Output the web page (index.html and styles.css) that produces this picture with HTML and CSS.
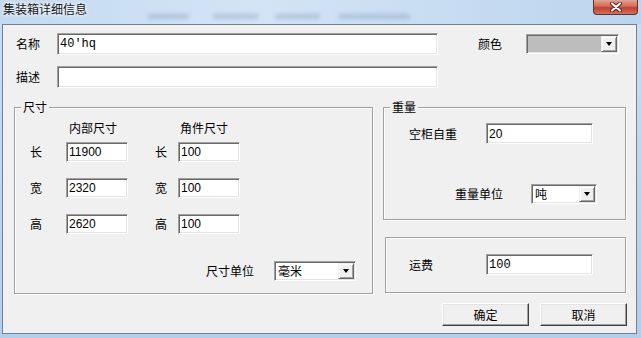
FILE: index.html
```html
<!DOCTYPE html>
<html lang="zh-CN">
<head>
    <meta charset="UTF-8">
    <title>集装箱详细信息</title>
    <link rel="stylesheet" href="styles.css">
</head>
<body>
    <div class="titlebar">
        <span class="title">集装箱详细信息</span>
        <span class="smudges">
            <i class="smudge s1"></i><i class="smudge s2"></i><i class="smudge s3"></i><i class="smudge s4"></i>
        </span>
        <span class="close">
            <svg width="14" height="10" viewBox="0 0 14 10">
                <path d="M3 1.5 L11 8.5 M11 1.5 L3 8.5" stroke="#5a1e18" stroke-width="4" stroke-linecap="round"/>
                <path d="M3 1.5 L11 8.5 M11 1.5 L3 8.5" stroke="#fff" stroke-width="2.2" stroke-linecap="round"/>
            </svg>
        </span>
    </div>

    <div class="client">
        <div class="row first">
            <label class="lbl field-lbl">名称</label>
            <input class="text wide mono" type="text" value="40'hq">
            <label class="lbl color-lbl">颜色</label>
            <div class="combo color-combo"><span class="combo-text"></span><b class="drop"></b></div>
        </div>
        <div class="row second">
            <label class="lbl field-lbl">描述</label>
            <input class="text wide" type="text" value="">
        </div>

        <div class="lower">
            <div class="group size">
                <div class="legend">尺寸</div>
                <div class="head">
                    <span class="head-inner">内部尺寸</span>
                    <span>角件尺寸</span>
                </div>
                <div class="dims">
                    <span class="lbl">长</span><input class="text dim" type="text" value="11900">
                    <span></span>
                    <span class="lbl">长</span><input class="text dim" type="text" value="100">

                    <span class="lbl">宽</span><input class="text dim" type="text" value="2320">
                    <span></span>
                    <span class="lbl">宽</span><input class="text dim" type="text" value="100">

                    <span class="lbl">高</span><input class="text dim" type="text" value="2620">
                    <span></span>
                    <span class="lbl">高</span><input class="text dim" type="text" value="100">
                </div>
                <div class="unit-row">
                    <span class="lbl unit-lbl">尺寸单位</span>
                    <div class="combo size-unit"><span class="combo-text">毫米</span><b class="drop"></b></div>
                </div>
            </div>

            <div class="side">
                <div class="group weight">
                    <div class="legend">重量</div>
                    <div class="w-row tare">
                        <span class="lbl w-lbl">空柜自重</span>
                        <input class="text short" type="text" value="20">
                    </div>
                    <div class="w-row unit">
                        <span class="lbl w-unit-lbl">重量单位</span>
                        <div class="combo weight-unit"><span class="combo-text">吨</span><b class="drop"></b></div>
                    </div>
                </div>
                <div class="group freight">
                    <div class="w-row fee">
                        <span class="lbl w-lbl">运费</span>
                        <input class="text short mono" type="text" value="100">
                    </div>
                </div>
            </div>
        </div>

        <div class="buttons">
            <button class="btn">确定</button>
            <button class="btn">取消</button>
        </div>
    </div>
</body>
</html>
```

FILE: styles.css
```css
body {
    margin: 0;
    width: 641px;
    height: 338px;
    overflow: hidden;
    background: linear-gradient(#cadff4, #b4cde9);
    font-family: "Noto Sans CJK SC", "Liberation Sans", sans-serif;
    font-size: 12px;
    color: #000;
}

/* title bar */
.titlebar {
    height: 24px;
    display: flex;
    align-items: flex-start;
    background: linear-gradient(90deg, #c4daf1, #d3e4f6 40%, #bcd4ee);
}
.title {
    width: 87px;
    padding: 1px 0 0 3px;
    box-sizing: border-box;
    line-height: 15px;
    white-space: nowrap;
    color: #151515;
    text-shadow: 0 0 5px #fff, 0 0 3px #fff;
}
.smudges {
    display: flex;
    margin: 14px 0 0 61px;
}
.smudge {
    display: block;
    height: 5px;
    border-radius: 2px;
    background: rgba(60, 90, 140, 0.22);
    filter: blur(2px);
}
.s1 { width: 41px; }
.s2 { width: 45px; margin-left: 24px; }
.s3 { width: 45px; margin-left: 17px; }
.s4 { width: 72px; margin-left: 18px; }
.close {
    margin: 0 3px 0 auto;
    width: 45px;
    height: 15px;
    box-sizing: border-box;
    border: 1px solid #6e2e26;
    border-top: none;
    border-radius: 0 0 4px 4px;
    background: linear-gradient(#e2a394, #cf6a58 45%, #c2402c 55%, #d4705c);
    display: flex;
    align-items: center;
    justify-content: center;
}

/* client area */
.client {
    margin-left: 2px;
    width: 635px;
    height: 310px;
    box-sizing: border-box;
    border: 1px solid #6f8296;
    background: #f0f0f0;
    padding-top: 8px;
}
.row {
    display: flex;
    align-items: flex-start;
}
.row.second {
    margin-top: 11px;
}
.lbl {
    line-height: 20px;
    white-space: nowrap;
}
.field-lbl {
    margin-left: 13px;
    width: 41px;
    line-height: 22px;
}
.color-lbl {
    margin: 1px 0 0 40px;
    width: 48px;
}

/* sunken edit box */
.text {
    box-sizing: border-box;
    margin: 0;
    padding: 0 2px;
    border: 1px solid;
    border-color: #a0a0a0 #fff #fff #a0a0a0;
    box-shadow: inset 1px 1px 0 #696969, inset -1px -1px 0 #e3e3e3;
    background: #fff;
    font-family: "Liberation Sans", sans-serif;
    font-size: 12px;
    color: #000;
    outline: none;
}
.mono {
    font-family: "Liberation Mono", monospace;
}
.wide {
    width: 381px;
    height: 22px;
}
.dim {
    width: 62px;
    height: 20px;
}
.short {
    width: 107px;
    height: 21px;
}

/* combo box */
.combo {
    box-sizing: border-box;
    display: flex;
    height: 20px;
    padding: 1px;
    border: 1px solid;
    border-color: #a0a0a0 #fff #fff #a0a0a0;
    box-shadow: inset 1px 1px 0 #696969, inset -1px -1px 0 #e3e3e3;
    background: #fff;
}
.combo-text {
    flex: 1;
    padding-left: 2px;
    line-height: 16px;
}
.drop {
    width: 16px;
    box-sizing: border-box;
    border: 1px solid;
    border-color: #f0f0f0 #696969 #696969 #f0f0f0;
    box-shadow: inset 1px 1px 0 #fff, inset -1px -1px 0 #a0a0a0;
    background: #f0f0f0;
    display: flex;
    align-items: center;
    justify-content: center;
}
.drop::after {
    content: "";
    border-left: 3.5px solid transparent;
    border-right: 3.5px solid transparent;
    border-top: 4px solid #000;
}
.color-combo {
    width: 93px;
    margin-top: 1px;
    background: #bdbdbd;
}

/* group boxes */
.lower {
    display: flex;
    margin-top: 19px;
}
.group {
    box-sizing: border-box;
    border: 1px solid #a0a0a0;
    box-shadow: 1px 1px 0 #fff, inset 1px 1px 0 #fff;
}
.legend {
    width: fit-content;
    margin: -8px 0 0 6px;
    padding: 0 2px;
    line-height: 14px;
    background: #f0f0f0;
}
.size {
    margin-left: 11px;
    width: 359px;
    height: 187px;
}
.head {
    display: flex;
    margin-top: 7px;
    padding-left: 54px;
    line-height: 14px;
}
.head-inner {
    width: 111px;
}
.dims {
    display: grid;
    grid-template-columns: 36px 62px 27px 23px 62px;
    grid-auto-rows: 20px;
    row-gap: 16px;
    margin-top: 7px;
    padding-left: 15px;
}
.unit-row {
    display: flex;
    justify-content: flex-end;
    margin-top: 27px;
    padding-right: 16px;
}
.unit-lbl {
    margin-right: 20px;
}
.size-unit {
    width: 82px;
}

.side {
    margin-left: 10px;
    width: 243px;
}
.weight {
    height: 113px;
}
.w-row {
    display: flex;
}
.w-row .lbl {
    line-height: 21px;
}
.tare {
    margin-top: 9px;
    padding-left: 25px;
}
.w-lbl {
    width: 77px;
}
.unit {
    margin-top: 40px;
    padding-left: 71px;
}
.w-row .w-unit-lbl {
    width: 76px;
    line-height: 20px;
}
.weight-unit {
    width: 66px;
}
.freight {
    margin: 17px 0 0 2px;
    width: 241px;
    height: 56px;
}
.fee {
    margin-top: 16px;
    padding-left: 23px;
}

/* buttons */
.buttons {
    display: flex;
    justify-content: flex-end;
    gap: 11px;
    margin-top: 9px;
    padding-right: 9px;
}
.btn {
    width: 87px;
    height: 23px;
    margin: 0;
    padding: 0;
    border: 1px solid;
    border-color: #fff #404040 #404040 #fff;
    box-shadow: inset -1px -1px 0 #a0a0a0, inset 1px 1px 0 #e3e3e3;
    background: #f0f0f0;
    font-family: "Noto Sans CJK SC", "Liberation Sans", sans-serif;
    font-size: 12px;
    color: #000;
}
```
